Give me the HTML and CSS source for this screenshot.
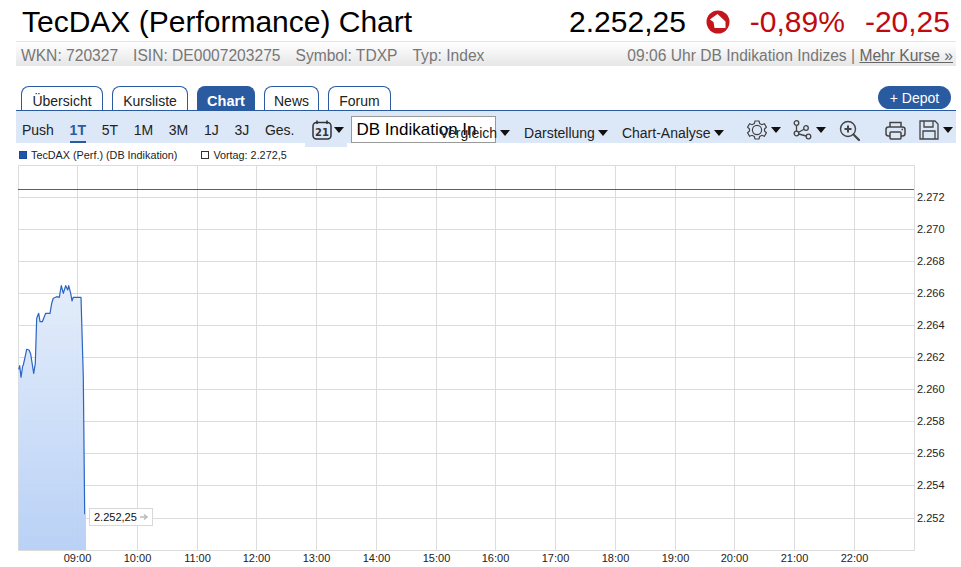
FILE: index.html
```html
<!DOCTYPE html>
<html lang="de">
<head>
<meta charset="utf-8">
<title>TecDAX (Performance) Chart</title>
<link rel="stylesheet" href="styles.css">
</head>
<body>
<main class="page">
  <header class="head">
    <h1 class="title">TecDAX (Performance) Chart</h1>
    <div class="quote">
      <span class="price">2.252,25</span>
      <svg class="down" viewBox="0 0 24 24" width="24" height="24" aria-hidden="true">
        <circle cx="12" cy="12" r="11.5" fill="#c2161c"/>
        <path d="M11.5 4 3.800 9.500 7.500 12 8.500 18H19.500V11.500Z" fill="#fff"/>
      </svg>
      <span class="neg pct">-0,89%</span>
      <span class="neg abs">-20,25</span>
    </div>
  </header>

  <div class="meta">
    <div class="ids">
      <span>WKN: 720327</span><span>ISIN: DE0007203275</span><span>Symbol: TDXP</span><span>Typ: Index</span>
    </div>
    <div class="src">09:06 Uhr DB Indikation Indizes | <a href="#">Mehr Kurse »</a></div>
  </div>

  <nav class="tabs">
    <a class="tab" href="#">Übersicht</a>
    <a class="tab" href="#">Kursliste</a>
    <a class="tab active" href="#">Chart</a>
    <a class="tab" href="#">News</a>
    <a class="tab" href="#">Forum</a>
    <a class="depot" href="#">+ Depot</a>
  </nav>

  <div class="toolbar">
    <div class="ranges">
      <span>Push</span><span class="on">1T</span><span>5T</span><span>1M</span><span>3M</span><span>1J</span><span>3J</span><span>Ges.</span>
    </div>
    <div class="cal">
      <svg viewBox="0 0 20 20" width="20" height="20" aria-hidden="true">
        <rect x="1" y="2.500" width="18" height="16.500" rx="3.500" fill="none" stroke="#333" stroke-width="1.500"/>
        <path d="M5 .5v3.500M15 .5v3.500" stroke="#333" stroke-width="1.600"/>
        <text x="10" y="15.500" class="cal-num">21</text>
      </svg>
      <i class="caret"></i>
    </div>
    <div class="select">DB Indikation In</div>
    <div class="menu vergleich">Vergleich<i class="caret"></i></div>
    <div class="menu darstellung">Darstellung<i class="caret"></i></div>
    <div class="menu analyse">Chart-Analyse<i class="caret"></i></div>
    <div class="tool gear">
      <svg viewBox="0 0 20 20" width="20" height="20" fill="none" stroke="#444" stroke-width="1.200" aria-hidden="true">
        <path d="M8 1h4l.7 2.600 2.300 1.100 2.400-.9 2 3.400-1.900 1.800v2l1.900 1.800-2 3.400-2.400-.9-2.300 1.100L12 19H8l-.7-2.600L5 15.300l-2.400.9-2-3.400L2.500 11V9L.6 7.200l2-3.400 2.400.9 2.300-1.100Z"/>
        <circle cx="10" cy="10" r="4.600"/>
      </svg>
      <i class="caret"></i>
    </div>
    <div class="tool nodes">
      <svg viewBox="0 0 19 20" width="19" height="20" fill="none" stroke="#444" stroke-width="1.300" aria-hidden="true">
        <circle cx="3.500" cy="3" r="2.300"/><circle cx="13" cy="8" r="2.300"/><circle cx="3.500" cy="13.500" r="2.300"/><circle cx="15.500" cy="16.500" r="2.300"/>
        <path d="M3.500 5.300v5.900M5.600 12.300 11 9.300M5.800 14l7.400 2"/>
      </svg>
      <i class="caret"></i>
    </div>
    <div class="tool zoomer">
      <svg viewBox="0 0 21 21" width="21" height="21" fill="none" stroke="#444" aria-hidden="true">
        <circle cx="9" cy="9" r="7.500" stroke-width="1.400"/>
        <path d="M5.500 9h7M9 5.500v7" stroke-width="2"/>
        <path d="M14.500 14.500 20 20" stroke-width="2.200" stroke-linecap="round"/>
      </svg>
    </div>
    <div class="tool printer">
      <svg viewBox="0 0 21 19" width="21" height="19" fill="none" stroke="#444" stroke-width="1.500" aria-hidden="true">
        <path d="M5 6V1.500h11V6"/>
        <rect x="1" y="6" width="19" height="9" rx="2.500"/>
        <rect class="paper" x="5" y="11" width="11" height="7" rx="1"/>
        <path d="M16.500 8.500h1.500"/>
      </svg>
    </div>
    <div class="tool save">
      <svg viewBox="0 0 20 20" width="20" height="20" fill="none" stroke="#444" stroke-width="1.300" aria-hidden="true">
        <path d="M1 1h15l3 3v15H1Z"/>
        <path d="M5 1v6h9V1M4 19v-8h12v8"/>
      </svg>
      <i class="caret"></i>
    </div>
  </div>

  <div class="legend">
    <span class="key"><i class="swatch blue"></i>TecDAX (Perf.) (DB Indikation)</span>
    <span class="key prev"><i class="swatch"></i>Vortag: 2.272,5</span>
  </div>

  <svg class="chart" viewBox="0 0 961 402" width="961" height="402" role="img" aria-label="TecDAX Intraday-Chart">
    <defs>
      <linearGradient id="area" x1="0" y1="0" x2="0" y2="1">
        <stop offset="0" stop-color="#e2ecfa"/>
        <stop offset="1" stop-color="#b6cff6"/>
      </linearGradient>
    </defs>
    <g transform="translate(0 -165)">
      <g class="grid">
        <path d="M18.500 165.500H914.500V550.500H18.500Z"/>
        <path d="M18 197.500H914M18 229.500H914M18 261.500H914M18 293.500H914M18 325.500H914M18 357.500H914M18 389.500H914M18 421.500H914M18 453.500H914M18 485.500H914M18 518.500H914"/>
        <path d="M77.500 165V550M137.500 165V550M197.500 165V550M256.500 165V550M316.500 165V550M376.500 165V550M436.500 165V550M495.500 165V550M555.500 165V550M615.500 165V550M675.500 165V550M734.500 165V550M794.500 165V550M854.500 165V550"/>
      </g>
      <path class="prev-line" d="M18 189.500H914"/>
      <path fill="url(#area)" fill-opacity=".95" d="M18.700 369.300 19.700 365.700 21 377.300 22.700 366 23.300 365 25 357.300 26.700 349.300 29 350 30.700 354 31.700 360.700 33.700 373.300 35.300 363.300 36.700 318.300 38.700 313.300 40 321.700 42.300 321.700 45.700 313.300 50 313.300 51.700 303.300 53.300 298.300 56.700 296.700 59.300 297.300 61.300 285.700 63.300 293.300 65.700 285.700 67.700 290 68.700 285.700 70.700 293.300 72 301 73.300 297.300 81 297.300 83.300 376.700 84.700 514.300 86 514.300 86 550 18.700 550Z"/>
      <path class="series" d="M18.700 369.300 19.700 365.700 21 377.300 22.700 366 23.300 365 25 357.300 26.700 349.300 29 350 30.700 354 31.700 360.700 33.700 373.300 35.300 363.300 36.700 318.300 38.700 313.300 40 321.700 42.300 321.700 45.700 313.300 50 313.300 51.700 303.300 53.300 298.300 56.700 296.700 59.300 297.300 61.300 285.700 63.300 293.300 65.700 285.700 67.700 290 68.700 285.700 70.700 293.300 72 301 73.300 297.300 81 297.300 83.300 376.700 84.700 514.300"/>
      <g class="ylabels">
        <text x="917" y="201">2.272</text><text x="917" y="233">2.270</text><text x="917" y="265">2.268</text><text x="917" y="297">2.266</text><text x="917" y="329">2.264</text><text x="917" y="361">2.262</text><text x="917" y="393">2.260</text><text x="917" y="425">2.258</text><text x="917" y="457">2.256</text><text x="917" y="489">2.254</text><text x="917" y="522">2.252</text>
      </g>
      <g class="xlabels">
        <text x="77.500" y="562">09:00</text><text x="137.500" y="562">10:00</text><text x="197.500" y="562">11:00</text><text x="256.500" y="562">12:00</text><text x="316.500" y="562">13:00</text><text x="376.500" y="562">14:00</text><text x="436.500" y="562">15:00</text><text x="495.500" y="562">16:00</text><text x="555.500" y="562">17:00</text><text x="615.500" y="562">18:00</text><text x="675.500" y="562">19:00</text><text x="734.500" y="562">20:00</text><text x="794.500" y="562">21:00</text><text x="854.500" y="562">22:00</text>
      </g>
      <rect class="tag" x="89.500" y="508.500" width="63" height="17"/>
      <text class="tag-text" x="94" y="521">2.252,25</text>
      <path class="tag-arrow" d="M140 517h6M144 514.500l3 2.500-3 2.500"/>
    </g>
  </svg>
</main>
</body>
</html>
```
FILE: styles.css
```css
* { box-sizing: border-box; }
html, body { margin: 0; padding: 0; background: #fff; overflow: hidden; }
body { font-family: "Liberation Sans", Arial, sans-serif; color: #111; }
.page { width: 961px; height: 567px; }

.head { display: flex; justify-content: space-between; align-items: center; height: 41px; padding: 2px 11px 0 22px; }
.title { margin: 0; font-size: 30px; font-weight: 400; line-height: 36px; color: #000; }
.quote { display: flex; align-items: center; font-size: 30px; line-height: 36px; color: #000; }
.down { margin-left: 20px; }
.neg { color: #bf0a0f; }
.pct { margin-left: 20px; }
.abs { margin-left: 20px; }

.meta { display: flex; justify-content: space-between; align-items: center; height: 25px; margin: 0 5px 0 16px; padding: 3px 3px 0 5px; border-top: 1px solid #e4e4e4; background: linear-gradient(#fff, #e6e6e6); font-size: 15.600px; color: #777; }
.ids { display: flex; gap: 15px; }
.src a { color: #666; text-decoration: underline; }

.tabs { display: grid; grid-template-columns: 82px 76px 58px 55px 63px 1fr; align-items: end; gap: 9px; height: 45px; margin: 0 5px 0 16px; padding: 0 5px; border-bottom: 1px solid #2a5aa0; }
.tab { display: flex; align-items: center; justify-content: center; height: 24px; padding-top: 4px; border: 1px solid #2a5aa0; border-bottom: 0; border-radius: 8px 8px 0 0; background: #fff; font-size: 14px; color: #222; text-decoration: none; }
.tab.active { background: #2a5aa0; color: #fff; font-weight: 700; font-size: 14.500px; }
.depot { display: flex; align-items: center; justify-content: center; justify-self: end; width: 73px; height: 23px; margin-bottom: 1px; padding-top: 1px; border-radius: 12px; background: #2a5aa0; color: #fff; font-size: 14px; text-decoration: none; }

.toolbar { display: flex; align-items: flex-start; height: 32px; margin: 0 5px 0 16px; padding-left: 6px; background: #dce8f8; font-size: 14px; color: #222; }
.ranges { display: flex; gap: 15.700px; height: 32px; }
.ranges span { height: 32px; padding-top: 11px; line-height: 16px; }
.ranges .on { font-weight: 700; color: #2a5aa0; border-bottom: 2px solid #2a5aa0; }
.cal { display: flex; align-items: center; gap: 2px; width: 42px; height: 36px; margin-left: 10px; padding: 1px 0 0 7px; background: #dce8f8; position: relative; }
.cal-num { font-size: 10px; font-weight: 700; fill: #333; text-anchor: middle; font-family: "DejaVu Sans", sans-serif; }
.caret { display: inline-block; width: 0; height: 0; border-left: 5px solid transparent; border-right: 5px solid transparent; border-top: 6px solid #111; }
.select { width: 145px; height: 27px; margin: 5px 0 0 4px; padding: 2px 0 0 5px; overflow: hidden; white-space: nowrap; border: 1px solid #999; background: #fff; font-size: 17px; line-height: 21px; color: #000; }
.menu { display: flex; align-items: center; gap: 3px; height: 16px; margin-top: 14px; white-space: nowrap; position: relative; }
.vergleich { margin-left: -56px; }
.darstellung { margin-left: 14px; }
.analyse { margin-left: 14px; }
.tool { display: flex; align-items: center; gap: 4px; height: 22px; margin-top: 8px; }
.paper { fill: #dce8f8; }
.gear { margin-left: 23px; }
.nodes { margin-left: 12px; }
.zoomer { margin-left: 13px; }
.printer { margin-left: 25px; }
.save { margin-left: 13px; }

.legend { display: flex; align-items: center; height: 22px; padding: 2px 0 0 19px; font-size: 10.800px; color: #222; }
.key { display: flex; align-items: center; }
.swatch { width: 8px; height: 8px; margin-right: 4px; border: 1px solid #333; background: #fff; }
.swatch.blue { background: #1f57ae; border-color: #1a4a96; }
.prev { margin-left: 24px; }

.chart { display: block; }
.grid path { fill: none; stroke: #dcdcdc; stroke-width: 1; }
.prev-line { stroke: #5a6068; stroke-width: 1; fill: none; }
.series { fill: none; stroke: #2a64c4; stroke-width: 1.200; stroke-linejoin: round; }
.ylabels text, .xlabels text { font-size: 11px; fill: #222; }
.xlabels text { text-anchor: middle; }
.tag { fill: #fff; stroke: #d8d8d8; }
.tag-text { font-size: 11px; fill: #111; }
.tag-arrow { fill: none; stroke: #bbb; stroke-width: 1.500; }
```
